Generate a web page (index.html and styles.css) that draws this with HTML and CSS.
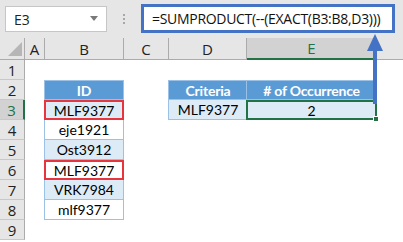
FILE: index.html
```html
<!DOCTYPE html>
<html lang="en">

<head>
    <meta charset="utf8">
    <title>SUMPRODUCT EXACT</title>

    <link rel="stylesheet" href="styles.css">
</head>

<body>
    <div class="app">
        <div class="toolbar">
            <div class="namebox">
                <span>E3</span>
                <span class="caret"></span>
            </div>
            <div class="dots">
                <span></span><span></span><span></span>
            </div>
            <div class="formula">=SUMPRODUCT(--(EXACT(B3:B8,D3)))</div>
        </div>

        <div class="sheet">
            <div class="corner">
                <svg width="14" height="14" viewBox="0 0 14 14">
                    <polygon points="14,0 14,14 0,14" fill="#b6b6b6"></polygon>
                </svg>
            </div>
            <div class="colhead">A</div>
            <div class="colhead">B</div>
            <div class="colhead">C</div>
            <div class="colhead">D</div>
            <div class="colhead active">E</div>
            <div class="colhead last"></div>

            <div class="rowhead r1">1</div>
            <div class="rowhead r2">2</div>
            <div class="rowhead r3 active">3</div>
            <div class="rowhead r4">4</div>
            <div class="rowhead r5">5</div>
            <div class="rowhead r6">6</div>
            <div class="rowhead r7">7</div>
            <div class="rowhead r8">8</div>
            <div class="rowhead r9">9</div>

            <!-- ID table -->
            <div class="cell th colb r2">ID</div>
            <div class="cell band colb r3 mark">MLF9377</div>
            <div class="cell colb r4">eje1921</div>
            <div class="cell band colb r5">Ost3912</div>
            <div class="cell colb r6 mark">MLF9377</div>
            <div class="cell band colb r7">VRK7984</div>
            <div class="cell colb r8">mlf9377</div>

            <!-- criteria table -->
            <div class="cell th cold r2">Criteria</div>
            <div class="cell th cole r2">&#35; of Occurrence</div>
            <div class="cell band cold r3">MLF9377</div>
            <div class="cell band cole r3 selected">2<span class="handle"></span></div>
        </div>

        <svg class="arrow" width="30" height="80" viewBox="0 0 30 80">
            <rect x="13" y="14" width="4" height="56" fill="#4472c4"></rect>
            <polygon points="15,0 23,17 7,17" fill="#4472c4"></polygon>
        </svg>
    </div>
</body>

</html>
```

FILE: styles.css
```css
* {
    box-sizing: border-box;
}

body {
    margin: 0;
    font-family: "Lato", "Liberation Sans", sans-serif;
    background: white;
    color: black;
}

.app {
    position: relative;
    width: 403px;
    height: 242px;
    overflow: hidden;
}

.toolbar {
    display: flex;
    align-items: flex-start;
    height: 38px;
    background: #e6e6e6;
}

.namebox {
    display: flex;
    align-items: center;
    justify-content: space-between;
    margin: 6px 0 0 5px;
    width: 102px;
    height: 26px;
    padding: 0 8px 0 8px;
    background: white;
    border: 1px solid #c6c6c6;
    font-family: "Open Sans", sans-serif;
    font-size: 14px;
    color: #222;
}

.namebox .caret {
    width: 0;
    height: 0;
    border-left: 4px solid transparent;
    border-right: 4px solid transparent;
    border-top: 5px solid #7a7a7a;
    margin-bottom: 2px;
}

.dots {
    display: flex;
    flex-direction: column;
    gap: 2px;
    width: 34px;
    align-items: center;
    margin-top: 14px;
}

.dots span {
    width: 2px;
    height: 2px;
    background: #a8a8a8;
}

.formula {
    margin-top: 4px;
    width: 254px;
    height: 29px;
    border: 3px solid #4472c4;
    background: white;
    padding-left: 8px;
    font-family: "Open Sans", sans-serif;
    font-size: 14px;
    letter-spacing: -0.3px;
    line-height: 23px;
    color: #111;
    white-space: nowrap;
}

.sheet {
    display: grid;
    grid-template-columns: 25px 20px 79px 45px 78px 130px 1fr;
    grid-template-rows: 22px repeat(9, 20px);
    font-size: 14px;
}

.corner {
    grid-column: 1;
    grid-row: 1;
    background: #e6e6e6;
    border-right: 1px solid #ababab;
    border-bottom: 1px solid #ababab;
    display: flex;
    justify-content: flex-end;
    align-items: flex-end;
    padding: 0 2px 3px 0;
}

.colhead {
    grid-row: 1;
    background: #e6e6e6;
    border-right: 1px solid #ababab;
    border-bottom: 1px solid #ababab;
    display: flex;
    align-items: center;
    justify-content: center;
    font-family: "Open Sans", sans-serif;
    font-size: 15px;
    color: #222;
}

.colhead.active {
    background: #d2d2d2;
    color: #217346;
    border-bottom: 2px solid #217346;
}

.colhead.last {
    border-right: 0;
}

.rowhead {
    grid-column: 1;
    background: #e6e6e6;
    border-right: 1px solid #ababab;
    border-bottom: 1px solid #c8c8c8;
    display: flex;
    align-items: center;
    justify-content: center;
    font-family: "Open Sans", sans-serif;
    font-size: 15px;
    color: #222;
}

.rowhead.active {
    background: #d2d2d2;
    color: #217346;
    border-right: 2px solid #217346;
}

.r1 { grid-row: 2; }
.r2 { grid-row: 3; }
.r3 { grid-row: 4; }
.r4 { grid-row: 5; }
.r5 { grid-row: 6; }
.r6 { grid-row: 7; }
.r7 { grid-row: 8; }
.r8 { grid-row: 9; }
.r9 { grid-row: 10; }

.colb { grid-column: 3; }
.cold { grid-column: 5; }
.cole { grid-column: 6; }

.cell {
    position: relative;
    display: flex;
    align-items: center;
    justify-content: center;
    background: white;
    border-left: 1px solid #9bc2e6;
    border-bottom: 1px solid #9bc2e6;
    margin-left: -1px;
    font-size: 14px;
}

.colb.cell,
.cole.cell {
    border-right: 1px solid #9bc2e6;
}

.cell.th {
    background: #5b9bd5;
    color: white;
    font-weight: bold;
    letter-spacing: -0.2px;
    border-left-color: #9bc2e6;
    border-top: 1px solid #9bc2e6;
}

.cell.band {
    background: #ddebf7;
}

.cell.mark {
    border: 2px solid #e8343c;
}

.cell.selected {
    border: 2px solid #217346;
}

.handle {
    position: absolute;
    right: -4px;
    bottom: -4px;
    width: 6px;
    height: 6px;
    background: #217346;
    border: 1px solid white;
}

.arrow {
    position: absolute;
    left: 360px;
    top: 34px;
}
```
